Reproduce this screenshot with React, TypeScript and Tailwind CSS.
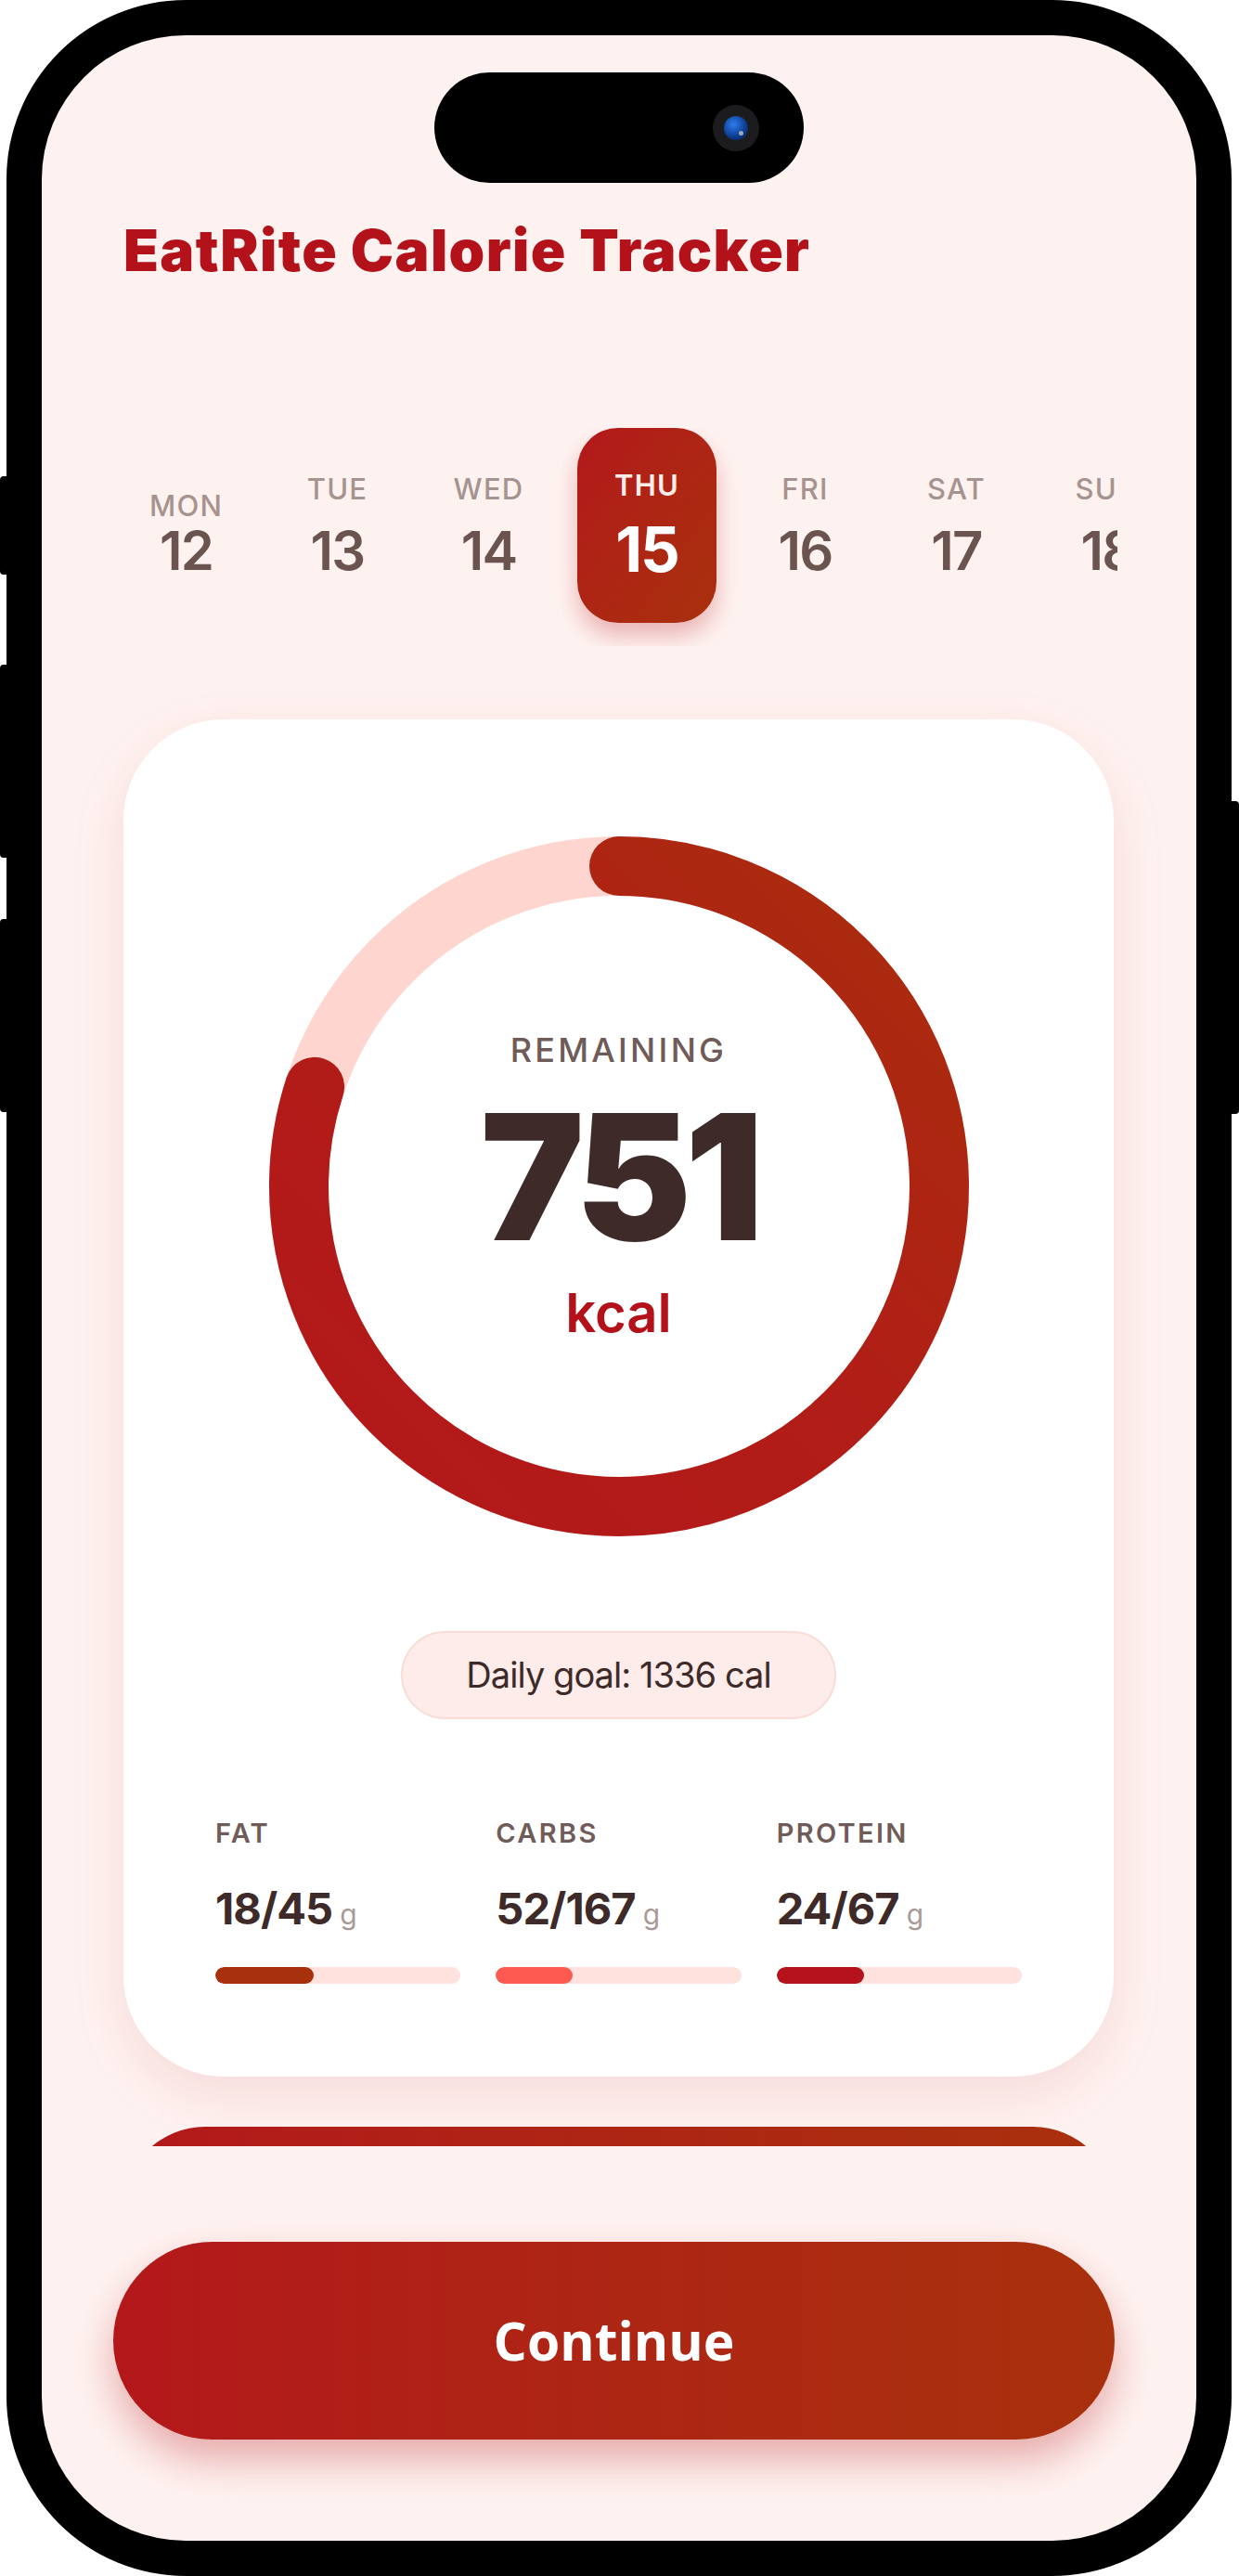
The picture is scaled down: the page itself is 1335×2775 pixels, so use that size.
import React from "react";

const days = [
  { d: "MON", n: "12" },
  { d: "TUE", n: "13" },
  { d: "WED", n: "14" },
  { d: "THU", n: "15", active: true },
  { d: "FRI", n: "16" },
  { d: "SAT", n: "17" },
  { d: "SUN", n: "18" },
];

const macros = [
  { label: "FAT", val: "18/45", pct: 0.4, color: "bg-[#A8300C]" },
  { label: "CARBS", val: "52/167", pct: 0.311, color: "bg-[#FF5A52]" },
  { label: "PROTEIN", val: "24/67", pct: 0.358, color: "bg-[#B5121B]" },
];

function Ring() {
  const r = 345;
  const C = 2 * Math.PI * r;
  const len = C * 0.8;
  return (
    <svg width="754" height="754" viewBox="0 0 754 754" className="col-start-1 row-start-1">
      <defs>
        <linearGradient id="rg" x1="0" y1="0" x2="754" y2="754" gradientUnits="userSpaceOnUse">
          <stop offset="0" stopColor="#B3171A" />
          <stop offset="0.5" stopColor="#B11D17" />
          <stop offset="1" stopColor="#A8300C" />
        </linearGradient>
      </defs>
      <circle cx="377" cy="377" r={r} fill="none" stroke="#FFD5CF" strokeWidth="64" />
      <circle
        cx="377"
        cy="377"
        r={r}
        fill="none"
        stroke="url(#rg)"
        strokeWidth="64"
        strokeLinecap="round"
        strokeDasharray={`${len} ${C}`}
        transform="rotate(-90 377 377)"
      />
    </svg>
  );
}

export default function App() {
  return (
    <div className="w-[1335px] h-[2775px] bg-white relative" style={{ fontFamily: "Inter, 'Noto Sans', sans-serif" }}>
      {/* side buttons */}
      <div className="absolute left-0 top-[513px] w-[10px] h-[106px] bg-black rounded-l-[4px]" />
      <div className="absolute left-0 top-[716px] w-[10px] h-[208px] bg-black rounded-l-[4px]" />
      <div className="absolute left-0 top-[990px] w-[10px] h-[208px] bg-black rounded-l-[4px]" />
      <div className="absolute right-0 top-[863px] w-[10px] h-[337px] bg-black rounded-r-[4px]" />

      <div className="ml-[7px] w-[1320px] h-[2775px] rounded-[193px] bg-black p-[38px]">
        <div className="relative h-full w-full rounded-[155px] bg-[#FEF2F0] overflow-hidden flex flex-col">
          {/* dynamic island */}
          <div className="mt-[40px] mx-auto w-[398px] h-[119px] rounded-full bg-black flex items-center justify-end pr-[48px]">
            <div className="w-[50px] h-[50px] rounded-full bg-[#1c1c1f] flex items-center justify-center">
              <div className="w-[26px] h-[26px] rounded-full bg-[radial-gradient(circle_at_40%_35%,#2f7cf0,#0b3a8c_60%,#061a3a)] relative">
                <div className="absolute right-[5px] bottom-[5px] w-[5px] h-[5px] rounded-full bg-[#9ab]" />
              </div>
            </div>
          </div>

          {/* title */}
          <h1 className="mt-[42px] ml-[88px] text-[62px] leading-none font-black text-[#B3121B] tracking-[0.022em]">
            EatRite Calorie Tracker
          </h1>

          {/* days */}
          <div className="mt-[160px] ml-[88px] w-[1071px] overflow-hidden pb-[25px]">
            <div className="flex gap-[28px]">
              {days.map((x, i) =>
                x.active ? (
                  <div
                    key={i}
                    className="shrink-0 w-[150px] h-[210px] rounded-[44px] bg-gradient-to-br from-[#B3171A] to-[#A8300C] shadow-[0_14px_24px_rgba(179,23,26,0.28)] flex flex-col items-center justify-center"
                  >
                    <div className="text-[31px] leading-none font-semibold tracking-[0.04em] text-[#FDEDEA]">{x.d}</div>
                    <div className="mt-[20px] text-[67px] leading-none font-bold text-white tracking-[-0.03em]">{x.n}</div>
                  </div>
                ) : (
                  <div key={i} className="shrink-0 w-[135px] h-[210px] flex flex-col items-center justify-center">
                    <div
                      className={`text-[31px] leading-none font-medium tracking-[0.04em] text-[#A6938F] ${i === 0 ? "translate-y-[18px]" : ""}`}
                    >
                      {x.d}
                    </div>
                    <div className="mt-[22px] text-[58px] leading-none font-semibold text-[#6B5350] tracking-[-0.03em]">{x.n}</div>
                  </div>
                )
              )}
            </div>
          </div>

          {/* scroll content */}
          <div className="h-[1616px] overflow-hidden flex flex-col">
            <div className="mt-[79px] ml-[88px] w-[1067px] rounded-[108px] bg-white shadow-[0_20px_60px_rgba(179,18,27,0.10)] pt-[126px] pb-[100px] px-[99px] flex flex-col items-center">
              <div className="grid place-items-center">
                <Ring />
                <div className="col-start-1 row-start-1 flex flex-col items-center">
                  <div className="text-[36px] leading-none font-medium tracking-[0.09em] text-[#6F5B58]">REMAINING</div>
                  <div className="mt-[25px] text-[188px] leading-none font-black text-[#3E2A28] tracking-[-0.04em]">751</div>
                  <div className="mt-[23px] text-[58px] leading-none font-semibold text-[#B3121B]">kcal</div>
                </div>
              </div>

              <div className="mt-[102px] w-[469px] h-[95px] rounded-full bg-[#FDECE9] border-2 border-[#FADCD7] flex items-center justify-center">
                <span className="text-[38px] text-[#3E2A28] tracking-[-0.025em]">Daily goal: 1336 cal</span>
              </div>

              <div className="mt-[108px] w-full grid grid-cols-3 gap-[38px]">
                {macros.map((m) => (
                  <div key={m.label} className="flex flex-col">
                    <div className="text-[29px] leading-none font-semibold tracking-[0.08em] text-[#6F5B58]">{m.label}</div>
                    <div className="mt-[43px] flex items-baseline">
                      <span className="text-[47px] leading-none font-bold text-[#3E2A28] tracking-[-0.02em]">{m.val}</span>
                      <span className="ml-[8px] text-[30px] leading-none text-[#A89A98]">g</span>
                    </div>
                    <div className="mt-[40px] h-[18px] rounded-full bg-[#FFE1DE] overflow-hidden">
                      <div className={`h-full rounded-full ${m.color}`} style={{ width: `${m.pct * 100}%` }} />
                    </div>
                  </div>
                ))}
              </div>
            </div>

            <div className="mt-[54px] mx-[88px] shrink-0 h-[200px] rounded-t-[88px] bg-gradient-to-r from-[#B3171A] to-[#A8300C]" />
          </div>

          {/* button */}
          <button className="mt-[103px] ml-[77px] w-[1079px] h-[213px] rounded-full bg-gradient-to-r from-[#B3171A] to-[#A8300C] shadow-[0_22px_44px_rgba(179,23,26,0.32)] flex items-center justify-center">
            <span className="text-[57px] font-bold text-white" style={{ fontFamily: "'Open Sans', sans-serif" }}>
              Continue
            </span>
          </button>
        </div>
      </div>
    </div>
  );
}
